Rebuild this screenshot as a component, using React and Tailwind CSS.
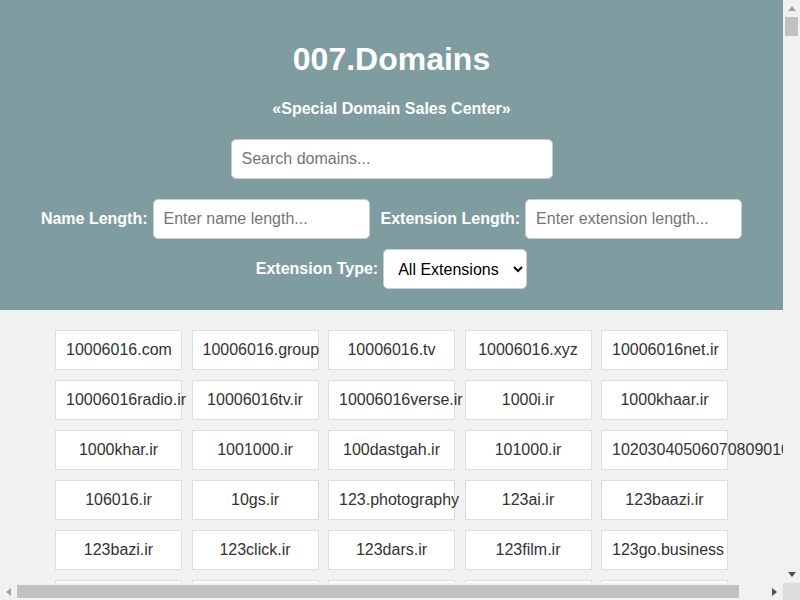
import { useState } from 'react';

const domains = [
  '10006016.com', '10006016.group', '10006016.tv', '10006016.xyz', '10006016net.ir',
  '10006016radio.ir', '10006016tv.ir', '10006016verse.ir', '1000i.ir', '1000khaar.ir',
  '1000khar.ir', '1001000.ir', '100dastgah.ir', '101000.ir', '10203040506070809010.ir',
  '106016.ir', '10gs.ir', '123.photography', '123ai.ir', '123baazi.ir',
  '123bazi.ir', '123click.ir', '123dars.ir', '123film.ir', '123go.business',
  '123kar.ir', '123khabar.ir', '123music.ir', '123shop.ir', '123tv.ir',
];

const inputCls = 'h-10 px-[10px] border border-[#ccc] rounded-[5px] bg-white text-base text-[#222] placeholder:text-[#757575] outline-none';

function Arrow({ dir, className }) {
  const pts = {
    up: '0,5 4,0 8,5',
    down: '0,0 8,0 4,5',
    left: '5,0 5,8 0,4',
    right: '0,0 5,4 0,8',
  }[dir];
  const vert = dir === 'up' || dir === 'down';
  return (
    <svg width={vert ? 8 : 5} height={vert ? 5 : 8} viewBox={vert ? '0 0 8 5' : '0 0 5 8'} className={className}>
      <polygon points={pts} fill="currentColor" />
    </svg>
  );
}

export default function App() {
  const [q, setQ] = useState('');
  const [nameLen, setNameLen] = useState('');
  const [extLen, setExtLen] = useState('');
  const [ext, setExt] = useState('all');

  return (
    <div className="h-screen w-screen flex flex-col overflow-hidden font-['Liberation_Sans',Arial,sans-serif]">
      <div className="flex flex-1 min-h-0">
        {/* Page */}
        <div className="flex-1 min-w-0 overflow-hidden bg-[#f2f2f2]">
          <header className="bg-[#7f9ca0] text-white pt-[41px] pb-[21px]">
            <h1 className="text-[32px] leading-[37px] font-bold text-center">007.Domains</h1>
            <p className="mt-[22px] text-base leading-[18px] font-bold text-center">«Special Domain Sales Center»</p>
            <div className="flex justify-center mt-[21px]">
              <input value={q} onChange={e => setQ(e.target.value)} placeholder="Search domains..." className={inputCls + ' w-[322px]'} />
            </div>
            <div className="flex justify-center items-center mt-5 gap-[11px]">
              <div className="flex items-center gap-[5px]">
                <label className="font-bold">Name Length:</label>
                <input value={nameLen} onChange={e => setNameLen(e.target.value)} placeholder="Enter name length..." className={inputCls + ' w-[217px]'} />
              </div>
              <div className="flex items-center gap-[5px]">
                <label className="font-bold">Extension Length:</label>
                <input value={extLen} onChange={e => setExtLen(e.target.value)} placeholder="Enter extension length..." className={inputCls + ' w-[217px]'} />
              </div>
            </div>
            <div className="flex justify-center items-center mt-[10px] gap-[5px]">
              <label className="font-bold">Extension Type:</label>
              <select value={ext} onChange={e => setExt(e.target.value)} className="h-10 w-[144px] px-[10px] border border-[#ccc] rounded-[5px] bg-white text-base text-black">
                <option value="all">All Extensions</option>
                <option value="ir">.ir</option>
                <option value="com">.com</option>
              </select>
            </div>
          </header>

          {/* Domain grid */}
          <div className="grid grid-cols-[repeat(5,127px)] gap-x-[9.5px] gap-y-[10px] justify-center pt-5 pb-5">
            {domains.map(d => (
              <div key={d} className="bg-white border border-[#ddd] px-[10px] py-[10px] text-center text-base leading-[18px] text-[#333] whitespace-nowrap">
                {d}
              </div>
            ))}
          </div>
        </div>

        {/* Vertical scrollbar */}
        <div className="w-[17px] bg-[#f1f1f1] flex flex-col items-center">
          <div className="h-[17px] flex items-center justify-center text-[#a3a3a3]"><Arrow dir="up" /></div>
          <div className="w-[13px] h-[19px] bg-[#c1c1c1]" />
          <div className="flex-1" />
          <div className="h-[17px] flex items-center justify-center text-[#505050]"><Arrow dir="down" /></div>
        </div>
      </div>

      {/* Horizontal scrollbar */}
      <div className="h-[17px] flex">
        <div className="flex-1 bg-[#f1f1f1] flex items-center">
          <div className="w-[17px] flex justify-center text-[#a3a3a3]"><Arrow dir="left" /></div>
          <div className="w-[722px] h-[13px] bg-[#c1c1c1]" />
          <div className="flex-1" />
          <div className="w-[17px] flex justify-center text-[#505050]"><Arrow dir="right" /></div>
        </div>
        <div className="w-[17px] bg-[#dcdcdc]" />
      </div>
    </div>
  );
}
